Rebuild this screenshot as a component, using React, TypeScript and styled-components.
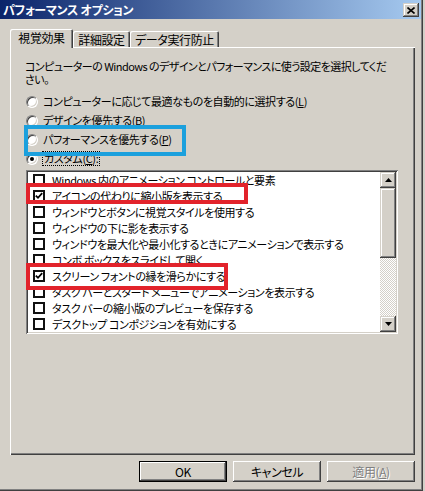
import React from "react";
import styled, { createGlobalStyle } from "styled-components";

const face = `"Noto Sans CJK JP", "Liberation Sans", sans-serif`;

const GlobalStyle = createGlobalStyle`
	html, body {
		margin: 0;
		padding: 0;
		background: #d4d0c8;
	}
	body {
		font-family: ${face};
		font-size: 11px;
		letter-spacing: -0.4px;
		line-height: 13px;
		color: #000;
		font-feature-settings: "palt";
	}
`;

const raised = `
	box-shadow: inset -1px -1px #404040, inset 1px 1px #d4d0c8,
		inset -2px -2px #808080, inset 2px 2px #ffffff;
`;

const Window = styled.div`
	position: relative;
	width: 423px;
	height: 491px;
	box-sizing: border-box;
	background: #d4d0c8;
	box-shadow: inset -1px -1px #404040, inset -2px -2px #808080;
	overflow: hidden;
`;

const TitleBar = styled.div`
	height: 19px;
	margin-right: 2px;
	padding: 0 2px 0 3px;
	display: flex;
	align-items: center;
	justify-content: space-between;
	background: linear-gradient(to right, #0a246a, #a6caf0);
`;

const TitleText = styled.span`
	color: #fff;
	font-weight: bold;
	font-size: 12px;
	letter-spacing: -0.3px;
	line-height: 19px;
`;

const CloseButton = styled.div`
	width: 16px;
	height: 14px;
	margin-top: 1px;
	background: #d4d0c8;
	display: flex;
	align-items: center;
	justify-content: center;
	${raised}
`;

const TabStrip = styled.div`
	display: flex;
	align-items: flex-end;
	height: 18px;
	margin-top: 10px;
	padding-left: 10px;
	position: relative;
	z-index: 1;
`;

const Tab = styled.div<{ $w: number; $active?: boolean }>`
	width: ${(p) => p.$w}px;
	height: ${(p) => (p.$active ? 19 : 16)}px;
	line-height: 17px;
	margin-bottom: ${(p) => (p.$active ? -1 : 0)}px;
	box-sizing: border-box;
	text-align: center;
	font-size: 12px;
	background: #d4d0c8;
	border-radius: 2px 2px 0 0;
	box-shadow: inset 1px 1px #ffffff, inset -1px 0 #404040,
		inset -2px 0 #808080;
	white-space: nowrap;
`;

const Panel = styled.div`
	margin-left: 10px;
	width: 405px;
	height: 408px;
	box-sizing: border-box;
	padding: 13px 0 0 15px;
	box-shadow: inset 1px 1px #ffffff, inset -1px -1px #404040,
		inset -2px -2px #808080;
`;

const Description = styled.div`
	display: flex;
	flex-direction: column;
`;

const DescLine = styled.span`
	height: 13px;
	line-height: 13px;
	letter-spacing: -0.55px;
	white-space: nowrap;
`;

const RadioGroup = styled.div`
	margin-top: 6px;
	display: flex;
	flex-direction: column;
`;

const RadioRow = styled.label`
	height: 19px;
	padding-left: 1px;
	display: flex;
	align-items: center;
	gap: 5px;
	white-space: nowrap;
`;

const RadioCircle = styled.span<{ $on?: boolean }>`
	width: 12px;
	height: 12px;
	box-sizing: border-box;
	border-radius: 50%;
	border: 1px solid;
	border-color: #808080 #ffffff #ffffff #808080;
	background: #fff;
	box-shadow: inset 1px 1px #404040, inset -1px -1px #d4d0c8;
	display: flex;
	align-items: center;
	justify-content: center;
	flex: none;
	&::after {
		content: "";
		width: 4px;
		height: 4px;
		border-radius: 50%;
		background: ${(p) => (p.$on ? "#000" : "transparent")};
	}
`;

const FocusLabel = styled.span`
	outline: 1px dotted #000;
	line-height: 13px;
	padding: 0 1px;
`;

const ListBox = styled.div`
	margin: 2px 0 0 1px;
	width: 372px;
	height: 164px;
	box-sizing: border-box;
	padding: 2px;
	display: flex;
	background: #fff;
	box-shadow: inset 1px 1px #808080, inset -1px -1px #ffffff,
		inset 2px 2px #404040, inset -2px -2px #d4d0c8;
`;

const Items = styled.div`
	flex: 1;
	overflow: hidden;
`;

const ItemRow = styled.div`
	height: 16px;
	padding-left: 5px;
	display: flex;
	align-items: center;
	gap: 7px;
	white-space: nowrap;
`;

const CheckBox = styled.span`
	width: 12px;
	height: 12px;
	box-sizing: border-box;
	border: 2px solid #111;
	background: #fff;
	display: flex;
	align-items: center;
	justify-content: center;
	flex: none;
`;

const ScrollBar = styled.div`
	width: 16px;
	display: flex;
	flex-direction: column;
`;

const ScrollButton = styled.div`
	height: 16px;
	background: #d4d0c8;
	display: flex;
	align-items: center;
	justify-content: center;
	${raised}
`;

const Thumb = styled.div`
	height: 70px;
	background: #d4d0c8;
	${raised}
`;

const Track = styled.div`
	flex: 1;
	background: repeating-conic-gradient(#ffffff 0 25%, #d4d0c8 0 50%) 0 0 / 2px
		2px;
`;

const ButtonRow = styled.div`
	width: 405px;
	margin: 6px 0 0 10px;
	display: flex;
	justify-content: flex-end;
	gap: 6px;
`;

const Button = styled.div<{ $default?: boolean; $disabled?: boolean }>`
	width: 88px;
	height: 21px;
	line-height: 21px;
	text-align: center;
	font-size: 12px;
	background: #d4d0c8;
	color: ${(p) => (p.$disabled ? "#808080" : "#000")};
	text-shadow: ${(p) => (p.$disabled ? "1px 1px #ffffff" : "none")};
	box-shadow: ${(p) =>
		p.$default
			? "inset 0 0 0 1px #000, inset -2px -2px #404040, inset 2px 2px #ffffff, inset -3px -3px #808080"
			: "inset -1px -1px #404040, inset 1px 1px #ffffff, inset -2px -2px #808080"};
`;

const Annotation = styled.div<{ $color: string }>`
	position: absolute;
	box-sizing: border-box;
	border: 4px solid ${(p) => p.$color};
	pointer-events: none;
	z-index: 2;
`;

const Arrow = ({ down }: { down?: boolean }) => (
	<svg width="7" height="4" viewBox="0 0 7 4">
		<path d={down ? "M0 0H7L3.5 4Z" : "M0 4H7L3.5 0Z"} fill="#000" />
	</svg>
);

const CheckMark = () => (
	<svg width="8" height="8" viewBox="0 0 8 8">
		<path d="M0.8 3.6L3 5.8L7.2 1.2" stroke="#000" strokeWidth="1.8" fill="none" />
	</svg>
);

const items: [string, boolean][] = [
	["Windows 内のアニメーション コントロールと要素", false],
	["アイコンの代わりに縮小版を表示する", true],
	["ウィンドウとボタンに視覚スタイルを使用する", false],
	["ウィンドウの下に影を表示する", false],
	["ウィンドウを最大化や最小化するときにアニメーションで表示する", false],
	["コンボ ボックスをスライドして開く", false],
	["スクリーン フォントの縁を滑らかにする", true],
	["タスク バーとスタート メニューでアニメーションを表示する", false],
	["タスク バーの縮小版のプレビューを保存する", false],
	["デスクトップ コンポジションを有効にする", false],
];

export default function App() {
	return (
		<Window>
			<GlobalStyle />
			<TitleBar>
				<TitleText>パフォーマンス オプション</TitleText>
				<CloseButton>
					<svg width="8" height="7" viewBox="0 0 8 7">
						<path d="M0.5 0.5L7.5 6.5M7.5 0.5L0.5 6.5" stroke="#000" strokeWidth="1.6" />
					</svg>
				</CloseButton>
			</TitleBar>

			<TabStrip>
				<Tab $w={63} $active>
					視覚効果
				</Tab>
				<Tab $w={57}>詳細設定</Tab>
				<Tab $w={89}>データ実行防止</Tab>
			</TabStrip>

			<Panel>
				<Description>
					<DescLine>
						コンピューターの Windows のデザインとパフォーマンスに使う設定を選択してくだ
					</DescLine>
					<DescLine>さい。</DescLine>
				</Description>
				<RadioGroup>
					<RadioRow>
						<RadioCircle />
						<span>
							コンピューターに応じて最適なものを自動的に選択する(<u>L</u>)
						</span>
					</RadioRow>
					<RadioRow>
						<RadioCircle />
						<span>
							デザインを優先する(<u>B</u>)
						</span>
					</RadioRow>
					<RadioRow>
						<RadioCircle />
						<span>
							パフォーマンスを優先する(<u>P</u>)
						</span>
					</RadioRow>
					<RadioRow>
						<RadioCircle $on />
						<FocusLabel>
							カスタム(<u>C</u>):
						</FocusLabel>
					</RadioRow>
				</RadioGroup>

				<ListBox>
					<Items>
						{items.map(([label, checked]) => (
							<ItemRow key={label}>
								<CheckBox>{checked && <CheckMark />}</CheckBox>
								<span>{label}</span>
							</ItemRow>
						))}
					</Items>
					<ScrollBar>
						<ScrollButton>
							<Arrow />
						</ScrollButton>
						<Thumb />
						<Track />
						<ScrollButton>
							<Arrow down />
						</ScrollButton>
					</ScrollBar>
				</ListBox>
			</Panel>

			<ButtonRow>
				<Button $default>OK</Button>
				<Button>キャンセル</Button>
				<Button $disabled>
					適用(<u>A</u>)
				</Button>
			</ButtonRow>

			<Annotation $color="#1ba0dd" style={{ left: 24, top: 125, width: 162, height: 31 }} />
			<Annotation $color="#e2232b" style={{ left: 26, top: 183, width: 222, height: 21 }} />
			<Annotation $color="#e2232b" style={{ left: 26, top: 263, width: 202, height: 27 }} />
		</Window>
	);
}
